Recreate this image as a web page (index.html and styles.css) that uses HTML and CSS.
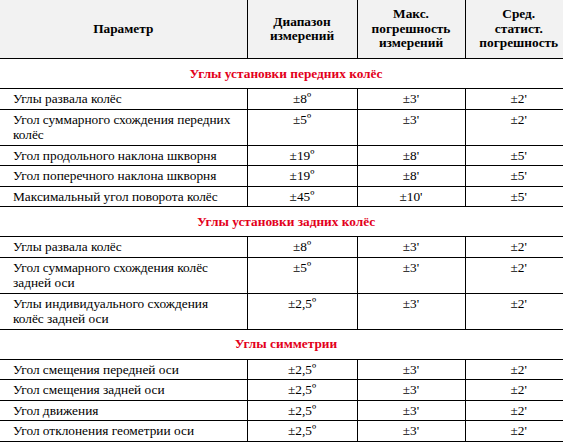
FILE: index.html
```html
<!DOCTYPE html>
<html lang="ru">
<head>
<meta charset="utf-8">
<title>Параметры</title>
<link rel="stylesheet" href="styles.css">
</head>
<body>
<table class="spec">
  <colgroup>
    <col class="c-param">
    <col class="c-range">
    <col class="c-max">
    <col class="c-avg">
  </colgroup>
  <thead>
    <tr class="head">
      <th>Параметр</th>
      <th>Диапазон<br>измерений</th>
      <th>Макс.<br>погрешность<br>измерений</th>
      <th>Сред.<br>статист.<br>погрешность</th>
    </tr>
  </thead>
  <tbody>
    <tr class="section"><td colspan="4">Углы установки передних колёс</td></tr>
    <tr><td>Углы развала колёс</td><td>±8º</td><td>±3'</td><td>±2'</td></tr>
    <tr><td>Угол суммарного схождения передних колёс</td><td>±5º</td><td>±3'</td><td>±2'</td></tr>
    <tr><td>Угол продольного наклона шкворня</td><td>±19º</td><td>±8'</td><td>±5'</td></tr>
    <tr><td>Угол поперечного наклона шкворня</td><td>±19º</td><td>±8'</td><td>±5'</td></tr>
    <tr><td>Максимальный угол поворота колёс</td><td>±45º</td><td>±10'</td><td>±5'</td></tr>
    <tr class="section"><td colspan="4">Углы установки задних колёс</td></tr>
    <tr><td>Углы развала колёс</td><td>±8º</td><td>±3'</td><td>±2'</td></tr>
    <tr><td>Угол суммарного схождения колёс задней оси</td><td>±5º</td><td>±3'</td><td>±2'</td></tr>
    <tr><td>Углы индивидуального схождения колёс задней оси</td><td>±2,5º</td><td>±3'</td><td>±2'</td></tr>
    <tr class="section"><td colspan="4">Углы симметрии</td></tr>
    <tr><td>Угол смещения передней оси</td><td>±2,5º</td><td>±3'</td><td>±2'</td></tr>
    <tr><td>Угол смещения задней оси</td><td>±2,5º</td><td>±3'</td><td>±2'</td></tr>
    <tr><td>Угол движения</td><td>±2,5º</td><td>±3'</td><td>±2'</td></tr>
    <tr><td>Угол отклонения геометрии оси</td><td>±2,5º</td><td>±3'</td><td>±2'</td></tr>
  </tbody>
</table>
</body>
</html>
```

FILE: styles.css
```css
html, body {
  margin: 0;
  padding: 0;
  background: #ffffff;
  overflow: hidden;
}

body {
  font-family: "Liberation Serif", "Times New Roman", serif;
  font-size: 13.33px;
  color: #000;
}

.spec {
  border-collapse: collapse;
  table-layout: fixed;
  width: 572px;
  font-family: "Liberation Serif", "Times New Roman", serif;
  font-size: 13.33px;
}

.c-param { width: 247px; }
.c-range { width: 110px; }
.c-max { width: 108px; }
.c-avg { width: 107px; }

.spec td,
.spec th {
  border-top: 1px solid #000;
  border-bottom: 1px solid #000;
  border-left: 1px solid #000;
  line-height: 15.5px;
  padding: 2px 4px 2px 4px;
  vertical-align: top;
  text-align: center;
}

.spec td:first-child,
.spec th:first-child {
  border-left: none;
  text-align: left;
  padding-left: 13px;
  padding-right: 11px;
}

.head th {
  border-top: none;
  background: #f2f2f2;
  font-weight: bold;
  height: 58px;
  padding: 0 4px;
  line-height: 14.5px;
  vertical-align: middle;
}

.head th:first-child {
  text-align: center;
  padding: 0;
}

.section td {
  border-left: none;
  height: 29px;
  padding: 0;
  vertical-align: middle;
  text-align: center;
  color: #e3001b;
  font-weight: bold;
}

.section td:first-child {
  text-align: center;
  padding: 0;
}
```
